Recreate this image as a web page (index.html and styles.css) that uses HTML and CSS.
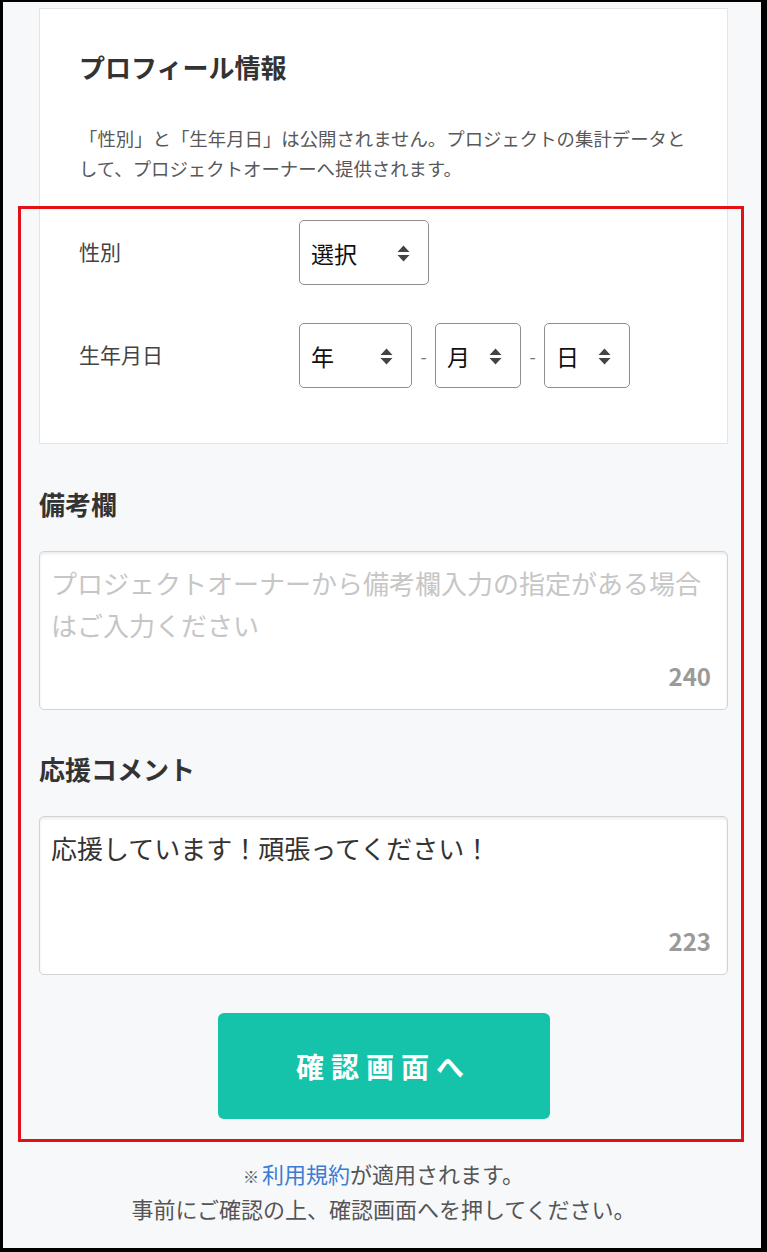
FILE: index.html
```html
<!DOCTYPE html>
<html lang="ja">
<head>
<meta charset="utf-8">
<title>支援内容の入力</title>
<link rel="stylesheet" href="styles.css">
</head>
<body>

<div class="screen">
    <div class="profile-card">
        <h2 class="card-title">プロフィール情報</h2>
        <p class="card-note">「性別」と「生年月日」は公開されません。プロジェクトの集計データとして、プロジェクトオーナーへ提供されます。</p>

        <div class="form-row">
            <label class="form-label" for="gender">性別</label>
            <span class="select">
                <select id="gender" class="select-gender">
                    <option>選択</option>
                    <option>男性</option>
                    <option>女性</option>
                    <option>回答しない</option>
                </select>
                <svg class="select-arrow" viewBox="0 0 13 17"><path d="M6.5 0.5L12.5 7H0.5Z M0.5 10H12.5L6.5 16.5Z"/></svg>
            </span>
        </div>

        <div class="form-row">
            <label class="form-label" for="birth-year">生年月日</label>
            <div class="date-fields">
                <span class="select">
                    <select id="birth-year" class="select-year">
                        <option>年</option>
                    </select>
                    <svg class="select-arrow" viewBox="0 0 13 17"><path d="M6.5 0.5L12.5 7H0.5Z M0.5 10H12.5L6.5 16.5Z"/></svg>
                </span>
                <span class="date-sep">-</span>
                <span class="select">
                    <select class="select-short">
                        <option>月</option>
                    </select>
                    <svg class="select-arrow" viewBox="0 0 13 17"><path d="M6.5 0.5L12.5 7H0.5Z M0.5 10H12.5L6.5 16.5Z"/></svg>
                </span>
                <span class="date-sep">-</span>
                <span class="select">
                    <select class="select-short">
                        <option>日</option>
                    </select>
                    <svg class="select-arrow" viewBox="0 0 13 17"><path d="M6.5 0.5L12.5 7H0.5Z M0.5 10H12.5L6.5 16.5Z"/></svg>
                </span>
            </div>
        </div>
    </div>

    <div class="field">
        <h3 class="field-title">備考欄</h3>
        <div class="textarea-wrap">
            <textarea class="textarea" placeholder="プロジェクトオーナーから備考欄入力の指定がある場合はご入力ください"></textarea>
            <span class="char-count">240</span>
        </div>
    </div>

    <div class="field">
        <h3 class="field-title">応援コメント</h3>
        <div class="textarea-wrap">
            <textarea class="textarea">応援しています！頑張ってください！</textarea>
            <span class="char-count">223</span>
        </div>
    </div>

    <div class="actions">
        <button class="submit-btn">確認画面へ</button>
    </div>

    <p class="terms">
        <span class="terms-mark">※</span><a href="#">利用規約</a>が適用されます。<br>
        事前にご確認の上、確認画面へを押してください。
    </p>

    <div class="highlight"></div>
</div>

</body>
</html>
```

FILE: styles.css
```css
body {
    margin: 0;
    font-family: "Noto Sans CJK JP", "Noto Sans", sans-serif;
}
.screen {
    position: relative;
    box-sizing: border-box;
    height: 1252px;
    overflow: hidden;
    border-style: solid;
    border-color: #000;
    border-width: 2px 6px 4px 3px;
    padding: 6px 33px 0 36px;
    background-color: #f7f8fa;
}
.profile-card {
    margin-bottom: 42px;
    padding: 40px 35px 55px 39px;
    border: 1px solid #e2e4e8;
    background-color: #fff;
}
.card-title {
    margin: 0;
    font-size: 26px;
    line-height: 35px;
    font-weight: 700;
    color: #333;
}
.card-note {
    margin: 39px 0 37px;
    font-size: 18.4px;
    line-height: 30px;
    color: #585858;
}
.form-row {
    display: flex;
    align-items: center;
}
.form-row + .form-row {
    margin-top: 38px;
}
.form-label {
    margin-top: -3px;
    width: 220px;
    font-size: 21px;
    color: #444;
}
.date-fields {
    display: flex;
    align-items: center;
}
.date-sep {
    width: 23px;
    text-align: center;
    font-size: 18px;
    color: #777;
}
.select {
    position: relative;
    display: flex;
}
.select select {
    -webkit-appearance: none;
    appearance: none;
    box-sizing: border-box;
    height: 65px;
    margin: 0;
    padding: 0 0 0 11px;
    border: 1px solid #8e8e8e;
    border-radius: 5px;
    background-color: #fff;
    font-family: inherit;
    font-size: 23px;
    color: #111;
}
.select-gender {
    width: 130px;
}
.select-year {
    width: 113px;
}
.select-short {
    width: 86px;
}
.select-arrow {
    position: absolute;
    right: 19px;
    top: 50%;
    width: 13px;
    height: 17px;
    margin-top: -8px;
    fill: #444;
    pointer-events: none;
}
.field + .field {
    margin-top: 41px;
}
.field-title {
    margin: 0 0 30px;
    font-size: 26px;
    line-height: 35px;
    font-weight: 700;
    color: #333;
}
.textarea-wrap {
    position: relative;
}
.textarea {
    display: block;
    box-sizing: border-box;
    width: 100%;
    height: 159px;
    margin: 0;
    padding: 10px 11px;
    border: 1px solid #d3d3d3;
    border-radius: 5px;
    box-shadow: inset 0 2px 3px rgba(0, 0, 0, 0.08);
    background-color: #fff;
    font-family: inherit;
    font-size: 26px;
    line-height: 42px;
    color: #333;
    resize: none;
}
.textarea::placeholder {
    color: #c6c6c6;
}
.char-count {
    position: absolute;
    right: 17px;
    bottom: 22px;
    font-size: 24px;
    line-height: 1;
    font-weight: 700;
    color: #9a9a9a;
}
.actions {
    display: flex;
    justify-content: center;
    margin-top: 38px;
}
.submit-btn {
    width: 332px;
    height: 106px;
    border: none;
    border-radius: 6px;
    background-color: #15c3aa;
    font-family: inherit;
    font-size: 28px;
    font-weight: 700;
    letter-spacing: 7px;
    color: #fff;
    cursor: pointer;
}
.terms {
    margin: 38px 0 0;
    text-align: center;
    font-size: 22px;
    line-height: 32px;
    color: #555;
}
.terms-mark {
    margin-right: 3px;
    font-size: 16px;
}
.terms a {
    color: #3a7dd2;
    text-decoration: none;
}
.highlight {
    position: absolute;
    left: 15px;
    top: 204px;
    box-sizing: border-box;
    width: 726px;
    height: 936px;
    border: 3px solid #e50f17;
    pointer-events: none;
}
```
